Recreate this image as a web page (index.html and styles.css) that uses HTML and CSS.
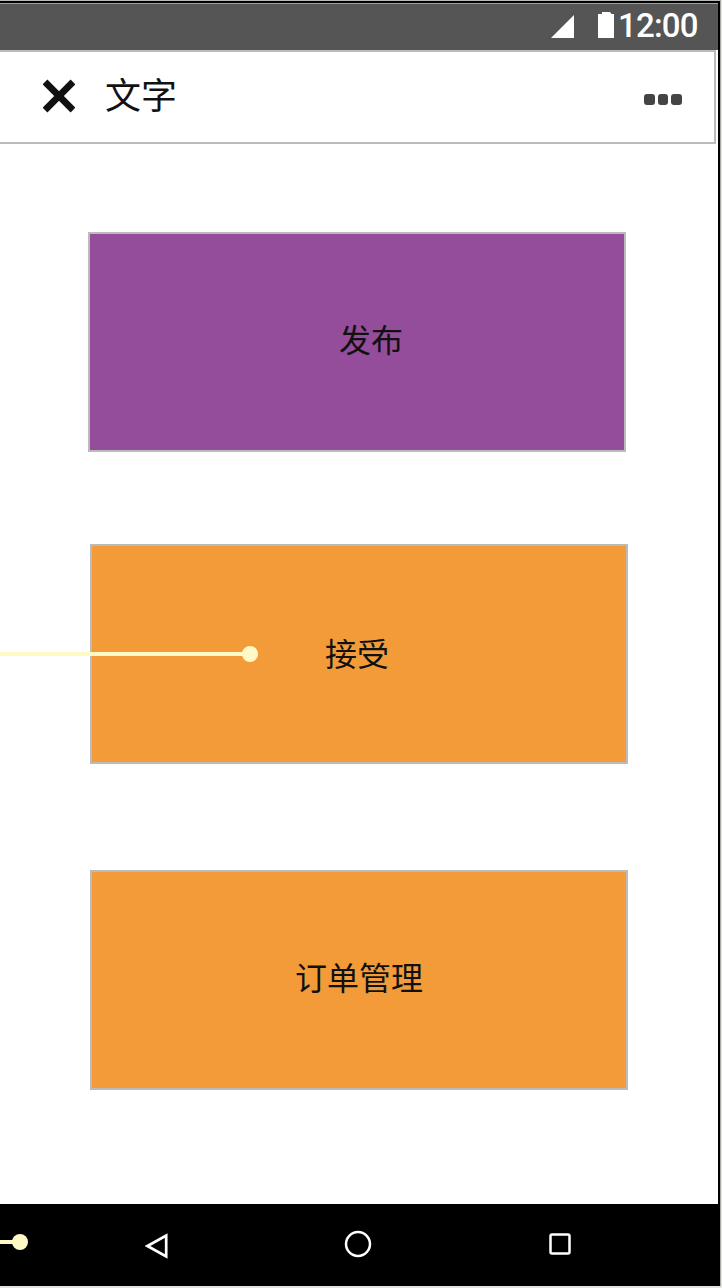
FILE: index.html
```html
<!DOCTYPE html>
<html lang="zh-CN">
<head>
<meta charset="utf-8">
<title>文字</title>
<link rel="stylesheet" href="styles.css">
</head>
<body>
<div class="device">
  <div class="statusbar">
    <svg class="signal" width="23" height="23" viewBox="0 0 23 23"><path d="M23 0V23H0Z" fill="#fff"/></svg>
    <svg class="battery" width="16" height="26" viewBox="0 0 16 26"><path d="M4 0H12L13.500 2H16V26H0V2H4Z" fill="#fff"/></svg>
    <span class="clock">12:00</span>
  </div>
  <div class="header-row">
    <header class="header">
      <svg class="close" width="32" height="34" viewBox="0 0 32 34"><path d="M2 3L30 31M30 3L2 31" stroke="#111" stroke-width="6.800"/></svg>
      <h1 class="title">文字</h1>
      <div class="more"><i class="dot"></i><i class="dot"></i><i class="dot"></i></div>
    </header>
  </div>
  <main class="content">
    <button class="card publish"><span>发布</span></button>
    <button class="card accept"><span>接受</span></button>
    <button class="card orders"><span>订单管理</span></button>
  </main>
  <nav class="navbar">
    <svg class="back" width="24" height="28" viewBox="0 0 24 28"><path d="M2.500 14L21.200 3.500V24.500Z" fill="none" stroke="#fff" stroke-width="2.700"/></svg>
    <svg class="home" width="28" height="28" viewBox="0 0 28 28"><circle cx="14" cy="14" r="12" fill="none" stroke="#fff" stroke-width="2.500"/></svg>
    <svg class="recent" width="22" height="22" viewBox="0 0 22 22"><rect x="1.500" y="1.500" width="19" height="19" rx="1.500" fill="none" stroke="#fff" stroke-width="2.500"/></svg>
  </nav>
  <div class="connector connector-accept"></div>
  <div class="connector connector-nav"></div>
</div>
</body>
</html>
```
FILE: styles.css
```css
* { box-sizing: border-box; }
body { margin: 0; background: #e4e4e0; }
.device {
  position: relative;
  display: flex;
  flex-direction: column;
  width: 721px;
  height: 1286px;
  padding-top: 1px;
  border-right: 1px solid #a9aba7;
  background: linear-gradient(#b4bab4 0 1px, #000 1px);
  font-family: Roboto, "Noto Sans CJK SC", sans-serif;
  color: #111;
}
.statusbar {
  display: flex;
  align-items: flex-start;
  height: 47px;
  width: 718px;
  margin-top: 2px;
  padding: 8px 0 0 551px;
  border-top: 1px solid #9da29d;
  background: #555;
}
.signal { margin-top: 3px; }
.battery { margin-left: 24px; }
.clock {
  margin: -7px 0 0 4px;
  font-size: 33px;
  line-height: 41px;
  font-weight: 500;
  letter-spacing: -0.8px;
  color: #fff;
}
.header-row { width: 718px; height: 94px; background: #fff; }
.header {
  display: flex;
  align-items: center;
  width: 716px;
  height: 94px;
  padding: 0 34px 0 43px;
  border: 2px solid #bbb;
  border-left: 0;
}
.close { margin-top: -2px; }
.title {
  margin: 0 0 0 30px;
  font-size: 36px;
  font-weight: 400;
  line-height: 52px;
}
.more { display: flex; gap: 3px; margin: 4px -2px 0 auto; }
.dot { width: 10.700px; height: 11px; border-radius: 3px; background: #444; }
.content {
  width: 718px;
  height: 1060px;
  padding: 88px 0 0 90px;
  background: #fff;
}
.card {
  display: flex;
  align-items: center;
  justify-content: center;
  width: 538px;
  height: 220px;
  padding: 0 0 8px;
  border: 2px solid #bbb;
  background: #f39b39;
  font: 32px/46px "Noto Sans CJK SC", sans-serif;
  color: #111;
}
.publish { margin-left: -2px; padding-left: 28px; background: #944d9b; }
.accept { margin-top: 92px; padding: 0 4px 4px 0; }
.orders { margin-top: 106px; }
.navbar {
  display: flex;
  align-items: center;
  height: 82px;
  padding-left: 145px;
}
.back { margin-top: 2px; }
.home { margin: -2px 0 0 175px; }
.recent { margin: -2px 0 0 177px; }
.connector {
  position: absolute;
  left: 0;
  height: 4px;
  background: #fffac5;
}
.connector::after {
  content: "";
  position: absolute;
  right: -8px;
  top: -6px;
  width: 16px;
  height: 16px;
  border-radius: 50%;
  background: #fffac5;
}
.connector-accept { top: 652px; width: 250px; }
.connector-nav { top: 1240px; width: 20px; }
```
